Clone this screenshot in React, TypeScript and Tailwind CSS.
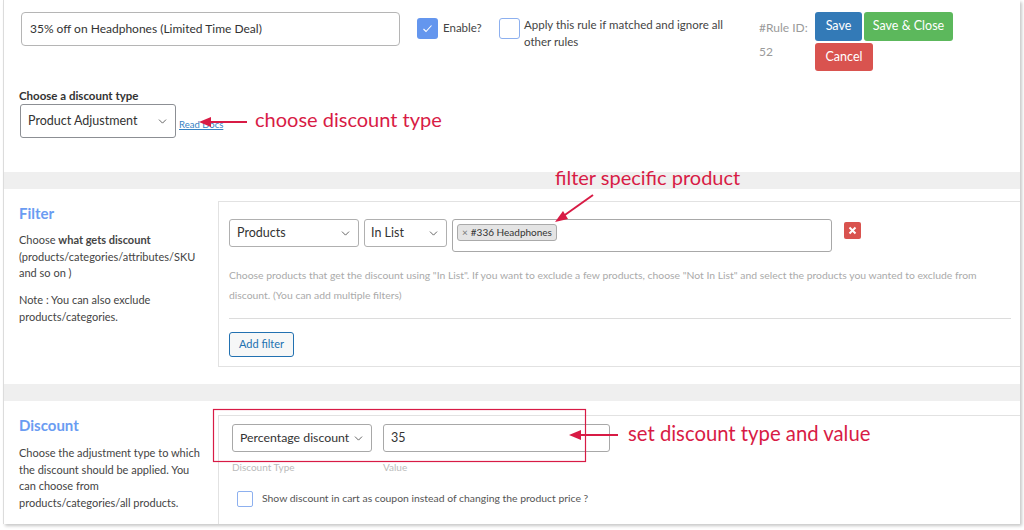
import React from "react";
import { ChevronDown } from "lucide-react";

const font = { fontFamily: 'Lato, "Open Sans", sans-serif' };

function Check({ checked, className }: { checked?: boolean; className?: string }) {
  return checked ? (
    <div className={"flex items-center justify-center rounded-[3px] bg-[#6496ee] " + (className ?? "")}>
      <svg width="11" height="9" viewBox="0 0 11 9" fill="none">
        <path d="M1.5 5 L4 7.5 L9.5 1.5" stroke="white" strokeWidth="1.1" />
      </svg>
    </div>
  ) : (
    <div className={"rounded-[3px] border border-[#8db0ef] bg-white " + (className ?? "")} />
  );
}

function Chev() {
  return <ChevronDown size={13} strokeWidth={1.5} color="#444" />;
}

export default function App() {
  return (
    <div className="relative h-[530px] w-[1024px] overflow-hidden bg-white text-[#444]" style={font}>
      <div className="ml-[3px] mr-[4px] border-l border-[#dcdcdc] bg-white shadow-[2px_2px_3px_rgba(0,0,0,0.22)]">
        {/* Section 1 */}
        <div className="h-[172px]">
          <div className="flex items-start pl-[17px] pt-[12px]">
            <div className="flex h-[34px] w-[379px] items-center whitespace-nowrap rounded-[4px] border border-[#b5b5b5] pl-[8px] text-[12px] text-[#333]">
              35% off on Headphones (Limited Time Deal)
            </div>
            <Check checked className="ml-[17px] mt-[6px] h-[21px] w-[21px]" />
            <div className="ml-[5px] mt-[8px] w-[56px] text-[11.5px] leading-[16px] text-[#444]">Enable?</div>
            <Check className="mt-[6px] h-[21px] w-[21px]" />
            <div className="ml-[4px] mt-[4px] w-[214px] text-[11.5px] leading-[17px] text-[#444]">
              Apply this rule if matched and ignore all other rules
            </div>
            <div className="ml-[21px] mt-[4px] w-[56px] text-[12px] leading-[24px] text-[#9a9a9a]">
              <div>#Rule ID:</div>
              <div>52</div>
            </div>
            <div className="flex flex-col gap-[2px]">
              <div className="flex gap-[2px]">
                <button className="h-[29px] w-[47px] rounded-[3px] bg-[#337ab7] text-[12.5px] text-white">Save</button>
                <button className="h-[29px] w-[89px] rounded-[3px] bg-[#5cb85c] text-[12.5px] text-white">Save &amp; Close</button>
              </div>
              <button className="h-[28px] w-[58px] rounded-[3px] bg-[#d9534f] text-[12.5px] text-white">Cancel</button>
            </div>
          </div>
          <div className="ml-[15px] mt-[17px] text-[11.5px] font-bold leading-[16px] text-[#333]">Choose a discount type</div>
          <div className="ml-[16px] flex items-end">
            <div className="flex h-[34px] w-[156px] items-center justify-between whitespace-nowrap rounded-[3px] border border-[#8c8f94] pl-[7px] pr-[6px] text-[12.5px] text-[#333]">
              <span>Product Adjustment</span>
              <Chev />
            </div>
            <a className="mb-[7px] ml-[3px] text-[9.5px] leading-[12px] text-[#3582c4] underline">Read Docs</a>
          </div>
        </div>

        <div className="h-[17px] bg-[#efefef]" />

        {/* Filter section */}
        <div className="flex pb-[17px]">
          <div className="w-[214px] pl-[15px] pt-[14px]">
            <div className="text-[15px] font-bold leading-[20px] text-[#6a9cf2]">Filter</div>
            <div className="mt-[9px] w-[188px] text-[11px] leading-[16.7px] text-[#444]">
              Choose <b>what gets discount</b> (products/categories/attributes/SKU and so on )
            </div>
            <div className="mt-[10px] w-[188px] text-[11px] leading-[16.7px] text-[#444]">
              Note : You can also exclude products/categories.
            </div>
          </div>
          <div className="mt-[12px] h-[166px] flex-1 border border-r-0 border-[#e2e2e2] pl-[10px] pt-[17px]">
            <div className="flex items-start">
              <div className="flex h-[28px] w-[130px] items-center justify-between rounded-[3px] border border-[#b0b0b0] pl-[7px] pr-[6px] text-[12.5px] text-[#333]">
                <span>Products</span>
                <Chev />
              </div>
              <div className="ml-[5px] flex h-[28px] w-[83px] items-center justify-between rounded-[3px] border border-[#b0b0b0] pl-[6px] pr-[6px] text-[12.5px] text-[#333]">
                <span>In List</span>
                <Chev />
              </div>
              <div className="ml-[5px] flex h-[33px] w-[380px] items-start rounded-[3px] border border-[#a8a8a8] pl-[4px] pt-[4px]">
                <span className="flex h-[17px] items-center whitespace-nowrap rounded-[3px] border border-[#aaa] bg-[#e4e4e4] px-[4px] text-[10px] text-[#333]">
                  <span className="mr-[3px] text-[#777]">×</span>#336 Headphones
                </span>
              </div>
              <div className="ml-[12px] mt-[3px] flex h-[17px] w-[17px] items-center justify-center rounded-[2px] bg-[#d9534f]">
                <svg width="9" height="9" viewBox="0 0 9 9">
                  <path d="M1.5 1.5 L7.5 7.5 M7.5 1.5 L1.5 7.5" stroke="white" strokeWidth="2" />
                </svg>
              </div>
            </div>
            <div className="mt-[13px] whitespace-nowrap text-[10.4px] leading-[20px] text-[#aaa]">
              Choose products that get the discount using "In List". If you want to exclude a few products, choose "Not In List" and select the products you wanted to exclude from
              <br />
              discount. (You can add multiple filters)
            </div>
            <div className="mr-[9px] mt-[13px] h-px bg-[#dcdcdc]" />
            <button className="mt-[13px] h-[25px] w-[65px] rounded-[3px] border border-[#2271b1] bg-[#f6f7f7] text-[11px] text-[#2271b1]">
              Add filter
            </button>
          </div>
        </div>

        <div className="h-[17px] bg-[#efefef]" />

        {/* Discount section */}
        <div className="flex h-[123px]">
          <div className="w-[214px] pl-[15px] pt-[14px]">
            <div className="text-[15px] font-bold leading-[20px] text-[#6a9cf2]">Discount</div>
            <div className="mt-[10px] w-[188px] text-[11px] leading-[16.7px] text-[#444]">
              Choose the adjustment type to which the discount should be applied. You can choose from products/categories/all products.
            </div>
          </div>
          <div className="mt-[14px] flex-1 border-l border-t border-[#e2e2e2] pl-[13px] pt-[8px]">
            <div className="flex">
              <div className="flex h-[28px] w-[140px] items-center justify-between whitespace-nowrap rounded-[3px] border border-[#a8a8a8] pl-[7px] pr-[6px] text-[12.3px] text-[#333]">
                <span>Percentage discount</span>
                <Chev />
              </div>
              <div className="ml-[11px] flex h-[28px] w-[227px] items-center rounded-[3px] border border-[#a8a8a8] pl-[7px] text-[12.5px] text-[#333]">
                35
              </div>
            </div>
            <div className="mt-[8px] flex text-[10px] leading-[14px] text-[#bbb]">
              <span className="w-[151px]">Discount Type</span>
              <span>Value</span>
            </div>
            <div className="ml-[5px] mt-[17px] flex items-center">
              <div className="h-[16px] w-[16px] rounded-[2px] border border-[#8db0ef]" />
              <span className="ml-[9px] text-[10.4px] text-[#555]">Show discount in cart as coupon instead of changing the product price ?</span>
            </div>
          </div>
        </div>
      </div>

      {/* Annotations overlay */}
      <svg className="pointer-events-none absolute left-0 top-0" width="1024" height="530">
        <rect x="213.5" y="409.5" width="372" height="52" fill="none" stroke="#d81b45" strokeWidth="1.2" />
        <line x1="247" y1="122" x2="208" y2="122" stroke="#d81b45" strokeWidth="2" />
        <polygon points="199,122 211,117 211,127" fill="#d81b45" />
        <line x1="593" y1="195" x2="562" y2="217" stroke="#d81b45" strokeWidth="2" />
        <polygon points="555,222 563,211 568,219" fill="#d81b45" />
        <line x1="618" y1="435" x2="579" y2="435" stroke="#d81b45" strokeWidth="2" />
        <polygon points="569,435 581,430 581,440" fill="#d81b45" />
      </svg>
      <div className="pointer-events-none absolute left-[255px] top-[105px] text-[20px] leading-[28px] text-[#d81b45]">choose discount type</div>
      <div className="pointer-events-none absolute left-[555px] top-[163px] text-[20px] leading-[28px] text-[#d81b45]">filter specific product</div>
      <div className="pointer-events-none absolute left-[628px] top-[419px] text-[20.3px] leading-[28px] text-[#d81b45]">set discount type and value</div>
    </div>
  );
}
